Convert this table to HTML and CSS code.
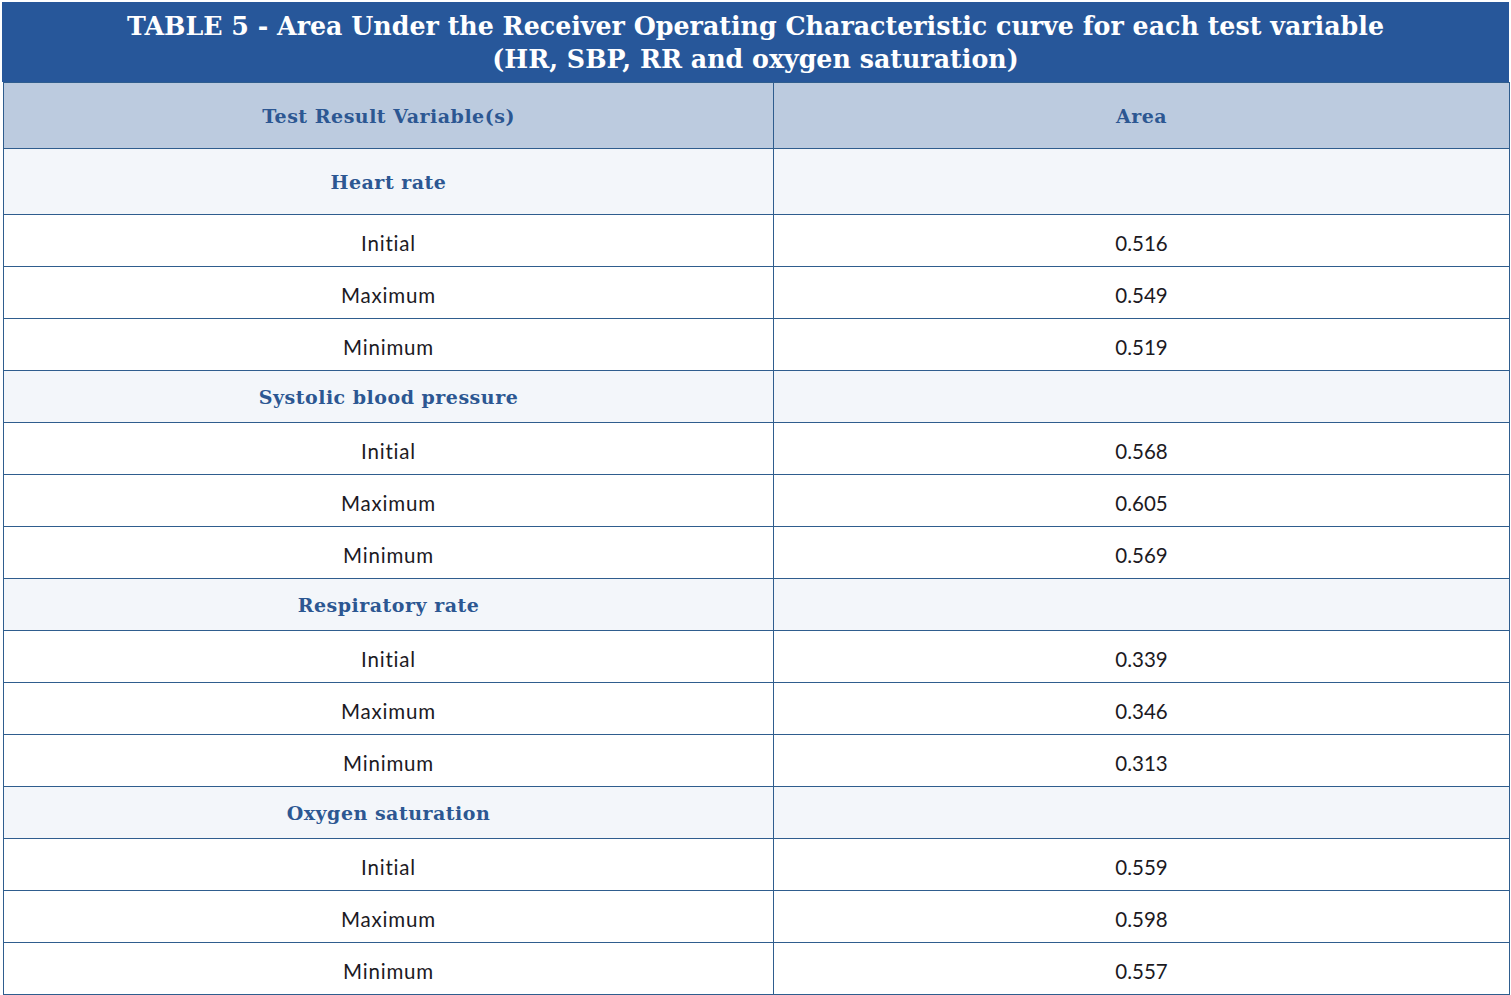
FILE: index.html
```html
<!DOCTYPE html>
<html lang="en">
<head>
<meta charset="utf-8">
<title>Table 5</title>
<link rel="stylesheet" href="styles.css">
</head>
<body>
<div class="wrap">
  <div class="title">TABLE 5 - Area Under the Receiver Operating Characteristic curve for each test variable<br>(HR, SBP, RR and oxygen saturation)</div>
  <table class="tbl">
    <colgroup><col class="c1"><col class="c2"></colgroup>
    <thead>
      <tr class="head"><th>Test Result Variable(s)</th><th>Area</th></tr>
    </thead>
    <tbody>
      <tr class="sec first"><td>Heart rate</td><td></td></tr>
      <tr class="row"><td class="lbl">Initial</td><td>0.516</td></tr>
      <tr class="row"><td class="lbl">Maximum</td><td>0.549</td></tr>
      <tr class="row"><td class="lbl">Minimum</td><td>0.519</td></tr>
      <tr class="sec"><td>Systolic blood pressure</td><td></td></tr>
      <tr class="row"><td class="lbl">Initial</td><td>0.568</td></tr>
      <tr class="row"><td class="lbl">Maximum</td><td>0.605</td></tr>
      <tr class="row"><td class="lbl">Minimum</td><td>0.569</td></tr>
      <tr class="sec"><td>Respiratory rate</td><td></td></tr>
      <tr class="row"><td class="lbl">Initial</td><td>0.339</td></tr>
      <tr class="row"><td class="lbl">Maximum</td><td>0.346</td></tr>
      <tr class="row"><td class="lbl">Minimum</td><td>0.313</td></tr>
      <tr class="sec"><td>Oxygen saturation</td><td></td></tr>
      <tr class="row"><td class="lbl">Initial</td><td>0.559</td></tr>
      <tr class="row"><td class="lbl">Maximum</td><td>0.598</td></tr>
      <tr class="row"><td class="lbl">Minimum</td><td>0.557</td></tr>
    </tbody>
  </table>
</div>
</body>
</html>
```
FILE: styles.css
```css
html, body {
  margin: 0;
  padding: 0;
  background: #ffffff;
}
.wrap {
  padding: 2px 2px 0 2px;
  width: 1507px;
}
.title {
  background: #27579a;
  color: #ffffff;
  font-family: "DejaVu Serif", "Liberation Serif", serif;
  font-weight: bold;
  font-size: 25.3px;
  line-height: 33px;
  text-align: center;
  padding: 8px 0 0;
  height: 72px;
  box-sizing: content-box;
}
.tbl {
  border-collapse: collapse;
  width: 1506px;
  margin-left: 1px;
  table-layout: fixed;
}
.c1 { width: 770px; }
.c2 { width: 736px; }
.tbl th, .tbl td {
  border: 1px solid #2f5d8e;
  text-align: center;
  padding: 0;
  line-height: 24px;
}
.head th {
  background: #bccbdf;
  color: #2c5792;
  font-family: "DejaVu Serif", "Liberation Serif", serif;
  font-weight: bold;
  font-size: 19px;
  height: 65px;
  letter-spacing: 0.5px;
}
.sec td {
  background: #f3f6fa;
  color: #2c5792;
  font-family: "DejaVu Serif", "Liberation Serif", serif;
  font-weight: bold;
  font-size: 19px;
  height: 51px;
  letter-spacing: 0.5px;
}
.sec.first td { height: 65px; }
.row td {
  background: #ffffff;
  color: #1c1a1f;
  font-family: "Lato", "Noto Sans", sans-serif;
  font-size: 20.5px;
  height: 47px;
  padding-top: 4px;
}
.row td.lbl { letter-spacing: 0.8px; }
```
